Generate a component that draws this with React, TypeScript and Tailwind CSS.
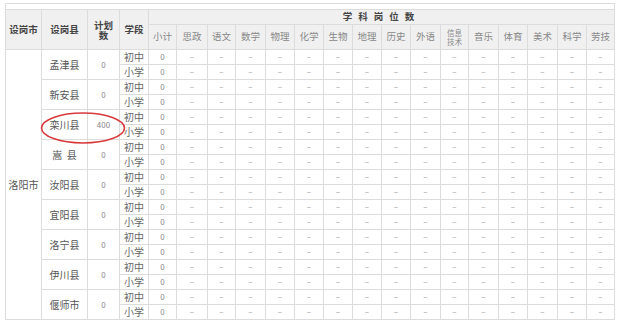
import React from 'react';

const subjects = ['小计', '思政', '语文', '数学', '物理', '化学', '生物', '地理', '历史', '外语', '信息技术', '音乐', '体育', '美术', '科学', '劳技'];
const subjectWidths = [28, 31, 28, 30, 29, 29, 29, 29, 29, 30, 28, 30, 29, 30, 29, 28];

const counties = [
  { name: '孟津县', plan: '0' },
  { name: '新安县', plan: '0' },
  { name: '栾川县', plan: '400' },
  { name: '嵩\u00a0\u00a0县', plan: '0' },
  { name: '汝阳县', plan: '0' },
  { name: '宜阳县', plan: '0' },
  { name: '洛宁县', plan: '0' },
  { name: '伊川县', plan: '0' },
  { name: '偃师市', plan: '0' },
];

const cell = 'border border-[#dcdcdc] p-0 text-center align-middle';

const App = () => {
  return (
    <div
      className="w-[640px] h-[321px] bg-white pt-[3px] pl-[5px] overflow-hidden"
      style={{ fontFamily: '"Noto Sans CJK SC", "Noto Sans", sans-serif' }}
    >
      <div className="relative w-[610px] border-t border-x border-[#dcdcdc]">
        <div className="h-[5px]" />
        <table className="table-fixed border-collapse w-[610px] -mx-px text-[9.5px] leading-none">
          <colgroup>
            <col className="w-[36px]" />
            <col className="w-[46px]" />
            <col className="w-[32px]" />
            <col className="w-[29px]" />
            {subjectWidths.map((w, i) => (
              <col key={i} style={{ width: w }} />
            ))}
          </colgroup>
          <thead className="bg-[#f0f0f0]">
            <tr className="h-[15px]">
              <th rowSpan={2} className={`${cell} font-bold text-[#444]`}>设岗市</th>
              <th rowSpan={2} className={`${cell} font-bold text-[#444]`}>设岗县</th>
              <th rowSpan={2} className={`${cell} font-bold text-[#444]`}>
                <div className="leading-[10px]">计划</div>
                <div className="leading-[10px]">数</div>
              </th>
              <th rowSpan={2} className={`${cell} font-bold text-[#444]`}>学段</th>
              <th colSpan={16} className={`${cell} font-bold text-[#444] tracking-[6px]`}>
                学科岗位数
              </th>
            </tr>
            <tr className="h-[25px]">
              {subjects.map((s) =>
                s === '信息技术' ? (
                  <th key={s} className={`${cell} font-normal text-[#888] text-[7.5px]`}>
                    <div className="leading-[9px]">信息</div>
                    <div className="leading-[9px]">技术</div>
                  </th>
                ) : (
                  <th key={s} className={`${cell} font-normal text-[#888]`}>{s}</th>
                )
              )}
            </tr>
          </thead>
          <tbody className="text-[#888]">
            {counties.map((c, ci) =>
              ['初中', '小学'].map((stage, si) => (
                <tr key={`${ci}-${si}`} className="h-[15px]">
                  {ci === 0 && si === 0 && (
                    <td rowSpan={18} className={`${cell} text-[#555] text-[10px]`}>洛阳市</td>
                  )}
                  {si === 0 && (
                    <>
                      <td rowSpan={2} className={`${cell} text-[#555] text-[10px]`}>{c.name}</td>
                      <td rowSpan={2} className={`${cell} text-[8px] text-[#888]`}>{c.plan}</td>
                    </>
                  )}
                  <td className={`${cell} text-[#666] text-[10px]`}>{stage}</td>
                  <td className={`${cell} text-[8px]`}>0</td>
                  {subjects.slice(1).map((s) => (
                    <td key={s} className={`${cell} text-[8px] text-[#999]`}>–</td>
                  ))}
                </tr>
              ))
            )}
          </tbody>
        </table>
        {/* highlight ring around 栾川县 */}
        <svg className="absolute left-[33px] top-[107px] pointer-events-none" width="88" height="34" viewBox="0 0 88 34">
          <ellipse cx="44" cy="17" rx="41.5" ry="15" fill="none" stroke="#d8393c" strokeWidth="1.6" />
        </svg>
      </div>
    </div>
  );
};

export default App;
